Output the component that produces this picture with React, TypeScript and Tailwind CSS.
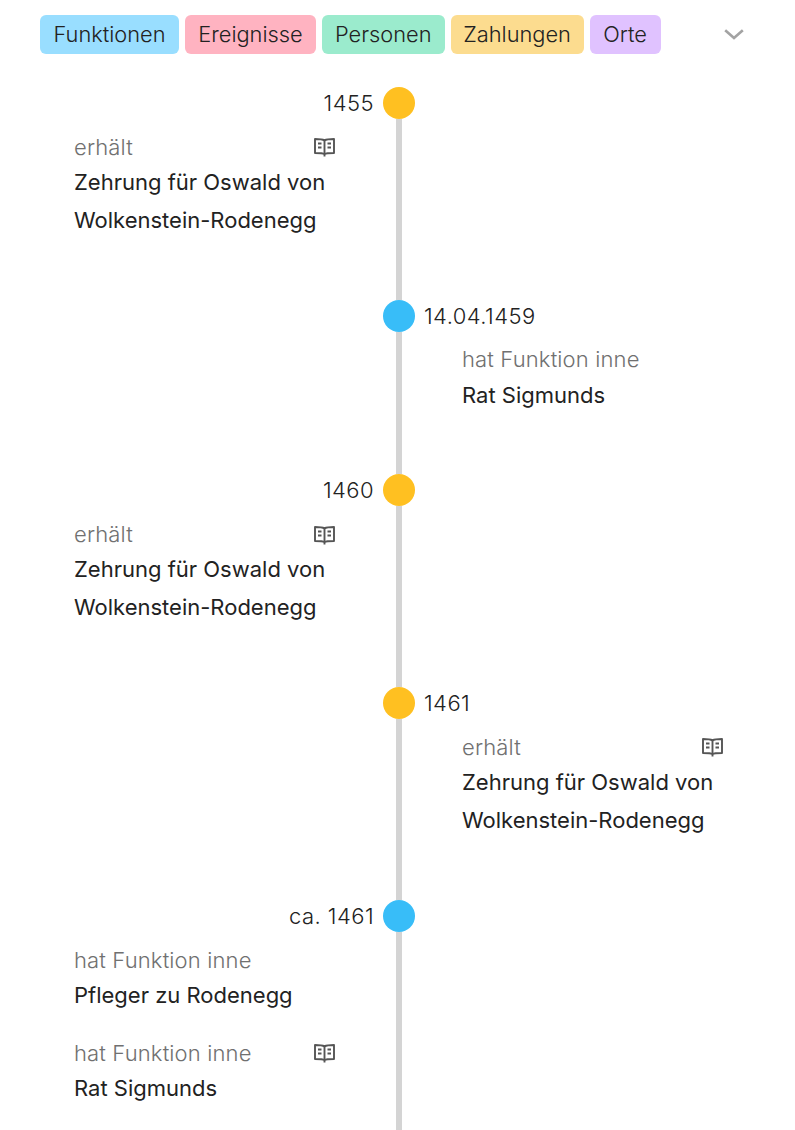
const Book = () => (
  <svg width="21" height="19" viewBox="0 0 21 19" fill="none" stroke="#555" strokeWidth="1.9" className="mt-[1px] shrink-0">
    <path d="M10.5 2.4C9 1.5 6.5 1 1 1V15C6.5 15 9 15.1 10.5 16C12 15.1 14.5 15 20 15V1C14.5 1 12 1.5 10.5 2.4Z" strokeLinejoin="round" />
    <path d="M10.5 2.5V18.5" />
    <path d="M4 5.5H7.5M4 9.5H7.5M13.5 5.5H17M13.5 9.5H17" strokeWidth="1.8" />
  </svg>
);

type Item = { label: string; title: string[]; book?: boolean };
type Ev = { date: string; side: "left" | "right"; color: string; items: Item[] };

const zehrung = ["Zehrung für Oswald von", "Wolkenstein-Rodenegg"];
const events: Ev[] = [
  { date: "1455", side: "left", color: "bg-[#ffc021]", items: [{ label: "erhält", title: zehrung, book: true }] },
  { date: "14.04.1459", side: "right", color: "bg-[#38bdf8]", items: [{ label: "hat Funktion inne", title: ["Rat Sigmunds"] }] },
  { date: "1460", side: "left", color: "bg-[#ffc021]", items: [{ label: "erhält", title: zehrung, book: true }] },
  { date: "1461", side: "right", color: "bg-[#ffc021]", items: [{ label: "erhält", title: zehrung, book: true }] },
  {
    date: "ca. 1461",
    side: "left",
    color: "bg-[#38bdf8]",
    items: [
      { label: "hat Funktion inne", title: ["Pfleger zu Rodenegg"] },
      { label: "hat Funktion inne", title: ["Rat Sigmunds"], book: true },
    ],
  },
];

const chips = [
  ["Funktionen", "bg-[#99deff] w-[139px]"],
  ["Ereignisse", "bg-[#ffb3c1] w-[131px]"],
  ["Personen", "bg-[#9bebcd] w-[122.6px]"],
  ["Zahlungen", "bg-[#fcdc8f] w-[133px]"],
  ["Orte", "bg-[#e0c2ff] w-[71px]"],
];

const Content = ({ ev }: { ev: Ev }) => (
  <div className="w-[261px] pb-[38.2px]">
    {ev.items.map((it, i) => (
      <div key={i} className="mb-[21.8px]">
        <div className="flex h-[33.3px] items-center justify-between">
          <span className="text-[22px] font-light tracking-[0.14px] text-[#707070]">{it.label}</span>
          {it.book && <Book />}
        </div>
        {it.title.map((t) => (
          <div key={t} className="text-[22px] font-[380] leading-[37.85px] text-[#222] whitespace-nowrap">{t}</div>
        ))}
      </div>
    ))}
  </div>
);

export default function App() {
  return (
    <div className="h-[1130px] overflow-hidden bg-white font-['Inter',sans-serif]">
      <div className="flex items-center pl-[40px] pt-[15px]">
        <div className="flex gap-[6px]">
          {chips.map(([t, c]) => (
            <span key={t} className={`flex h-[39px] items-center justify-center rounded-[6px] text-[21.8px] font-light text-[#222] ${c}`}>{t}</span>
          ))}
        </div>
        <svg width="20" height="11" viewBox="0 0 20 11" fill="none" stroke="#a3a3a3" strokeWidth="2.6" className="ml-[63px]">
          <path d="M1.2 1.2L10 9L18.8 1.2" />
        </svg>
      </div>
      <div className="mt-[33px] grid grid-cols-[383px_32px_1fr]">
        {events.map((ev) => (
          <div key={ev.date} className="col-span-3 grid grid-cols-subgrid">
            <div className="flex flex-col">
              {ev.side === "left" && (
                <>
                  <div className="flex h-[32px] items-center justify-end pr-[9px] pt-[1px] text-[22px] font-light tracking-[0.45px] text-[#222]">{ev.date}</div>
                  <div className="mt-[11.7px] pl-[74px]"><Content ev={ev} /></div>
                </>
              )}
            </div>
            <div className="flex flex-col items-center">
              <div className={`h-[32px] w-[32px] shrink-0 rounded-full ${ev.color}`} />
              <div className="w-[6px] flex-1 bg-[#d4d4d4]" />
            </div>
            <div className="flex flex-col">
              {ev.side === "right" && (
                <>
                  <div className="flex h-[32px] items-center pl-[9px] pt-[1px] text-[22px] font-light tracking-[0.45px] text-[#222]">{ev.date}</div>
                  <div className="mt-[11.7px] pl-[47px]"><Content ev={ev} /></div>
                </>
              )}
            </div>
          </div>
        ))}
      </div>
    </div>
  );
}
